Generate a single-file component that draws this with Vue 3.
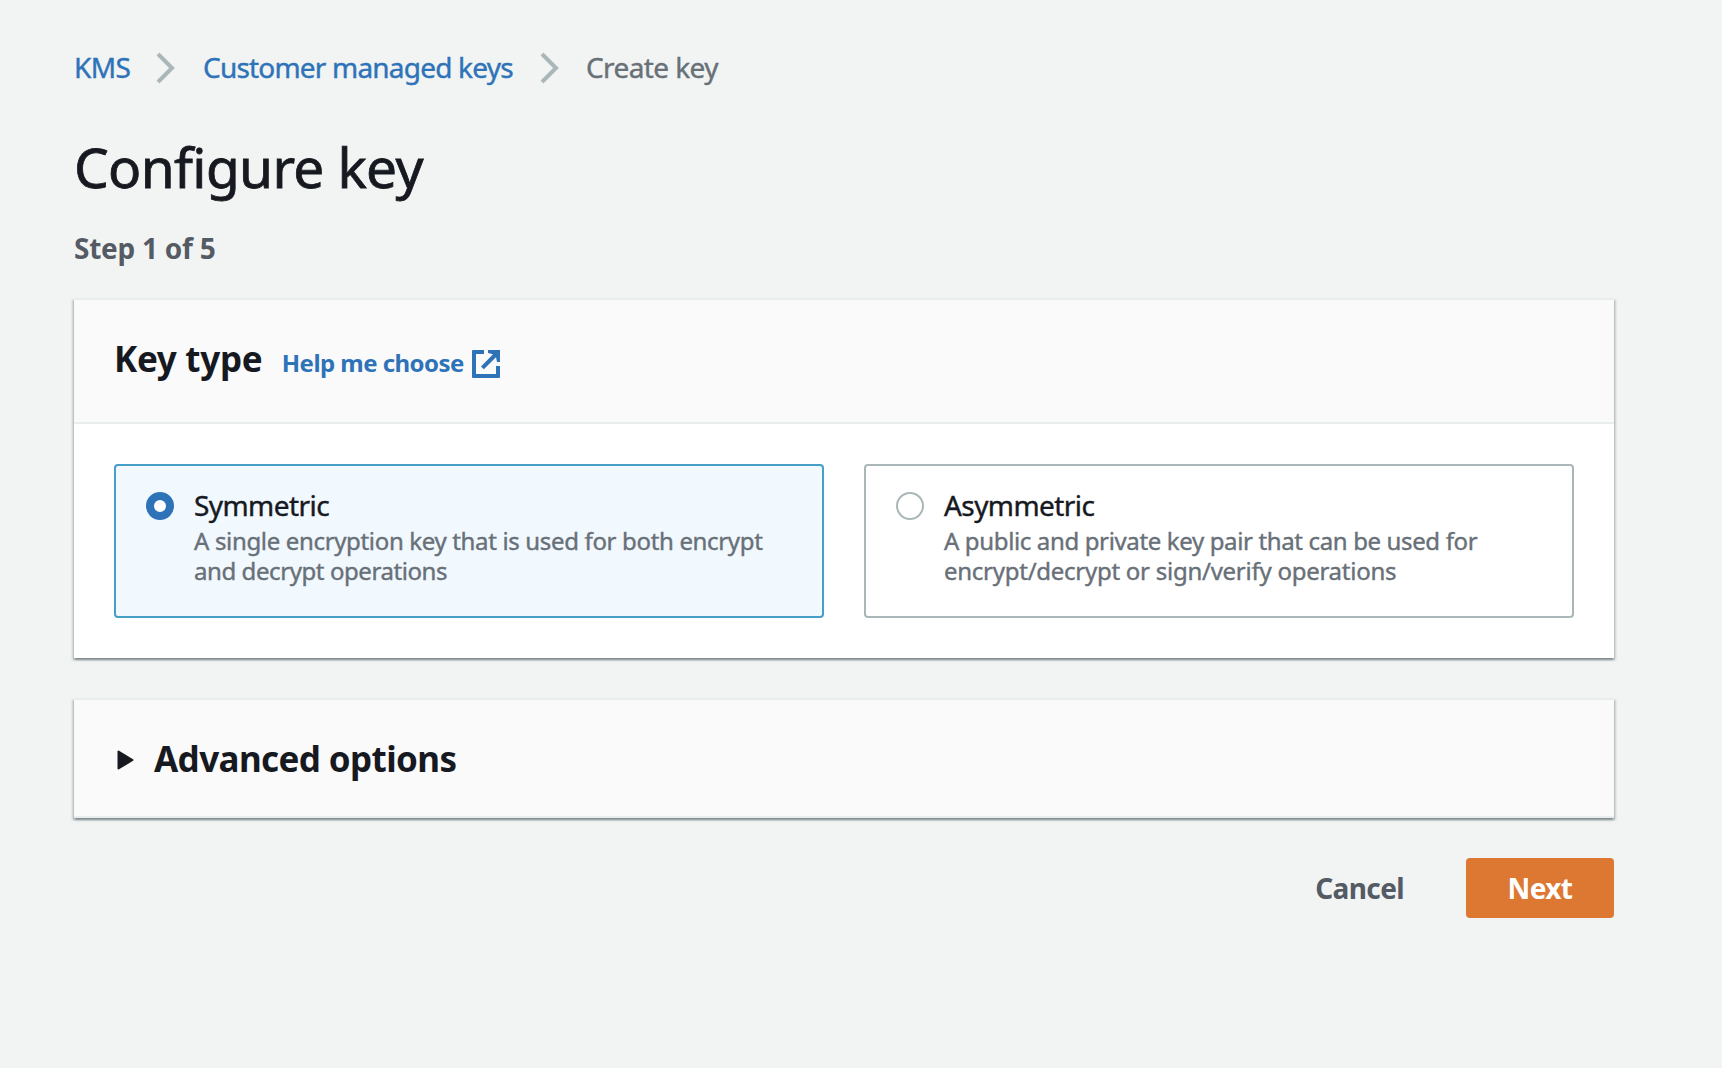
<script setup>
import { ref } from 'vue'

const keyTypes = [
  { id: 'symmetric', label: 'Symmetric', lines: ['A single encryption key that is used for both encrypt', 'and decrypt operations'] },
  { id: 'asymmetric', label: 'Asymmetric', lines: ['A public and private key pair that can be used for', 'encrypt/decrypt or sign/verify operations'] },
]
const selected = ref('symmetric')
</script>

<template>
  <main class="page">
    <nav class="crumbs">
      <a class="link kms">KMS</a>
      <svg class="chev" width="20" height="32" viewBox="0 0 20 32"><path d="M2 2 16 16 2 30" /></svg>
      <a class="link cmk">Customer managed keys</a>
      <svg class="chev" width="20" height="32" viewBox="0 0 20 32"><path d="M2 2 16 16 2 30" /></svg>
      <span class="current">Create key</span>
    </nav>
    <h1>Configure key</h1>
    <p class="step">Step 1 of 5</p>

    <section class="panel">
      <header class="head">
        <h2 class="type">Key type</h2>
        <a class="help">Help me choose</a>
        <svg class="ext" width="28" height="28" viewBox="0 0 28 28">
          <path d="M12 0v4H4v20h20v-8h4v11q0 1-1 1H1q-1 0-1-1V1q0-1 1-1Z" />
          <path d="M16 0H28V12H25L24 7.2 11.8 19.2 9 16.4 21 4.2 16 3Z" />
        </svg>
      </header>
      <div class="tiles">
        <label v-for="k in keyTypes" :key="k.id" class="tile" :class="[k.id, { on: selected === k.id }]" @click="selected = k.id">
          <span class="radio"></span>
          <span class="copy">
            <span class="name">{{ k.label }}</span>
            <span v-for="l in k.lines" :key="l" class="desc">{{ l }}</span>
          </span>
        </label>
      </div>
    </section>

    <section class="panel adv">
      <svg class="caret" width="17" height="20" viewBox="0 0 17 20"><path d="M1.5 1.5v17L15.5 10Z" /></svg>
      <h2>Advanced options</h2>
    </section>

    <footer class="actions">
      <button class="cancel">Cancel</button>
      <button class="next">Next</button>
    </footer>
  </main>
</template>

<style>
body { background: #f2f4f3; }
</style>
<style scoped>
.page { box-sizing: border-box; width: 1722px; height: 1068px; padding: 47px 108px 0 74px; background: #f2f4f3; color: #16191f; font-family: "Noto Sans", "Open Sans", sans-serif; overflow: hidden; }
.crumbs { display: flex; align-items: center; height: 40px; font-size: 28px; line-height: 40px; letter-spacing: -.6px; white-space: nowrap; -webkit-text-stroke: .4px; }
.link { color: #2e73b8; }
.kms { width: 82px; }
.cmk { width: 337px; letter-spacing: -.8px; }
.chev { flex: none; margin: 2px 27px 0 0; fill: none; stroke: #aab7b8; stroke-width: 4; }
.current { margin-left: -1px; color: #687078; }
h1, h2, p { margin: 0; }
h1 { margin-top: 44px; font-size: 55px; font-weight: 400; line-height: 72px; letter-spacing: -.65px; -webkit-text-stroke: .8px; }
.step { margin-top: 25px; color: #545b64; font-size: 28px; font-weight: 700; line-height: 40px; letter-spacing: -.25px; }
.panel { margin-top: 30px; border-top: 2px solid #eaeded; background: #fff; box-shadow: 0 2px 2px rgba(0,28,36,.3), 2px 2px 2px rgba(0,28,36,.15), -2px 2px 2px rgba(0,28,36,.15); }
.head { display: flex; align-items: center; height: 122px; padding-left: 40px; border-bottom: 2px solid #eaeded; background: #fafafa; }
h2 { font-size: 35px; font-weight: 700; line-height: 44px; letter-spacing: -.6px; white-space: nowrap; }
.type { margin-bottom: 4px; letter-spacing: -.3px; }
.help { margin: 2px 0 0 19.5px; color: #2e73b8; font-size: 24px; font-weight: 700; letter-spacing: -.55px; white-space: nowrap; }
.ext { margin: 6px 0 0 8px; fill: #2e73b8; }
.tiles { display: flex; gap: 40px; padding: 40px; }
.tile { box-sizing: border-box; display: flex; flex: 1; height: 154px; padding: 20px 30px; border: 2px solid #aab7b8; border-radius: 4px; }
.tile.on { border-color: #459fc7; background: #f1f8fe; }
.radio { box-sizing: border-box; flex: none; width: 28px; height: 28px; margin: 6px 20px 0 0; border: 2px solid #aab7b8; border-radius: 50%; background: #fff; }
.on .radio { border: 8px solid #2e73b8; }
.copy { display: flex; flex-direction: column; white-space: nowrap; -webkit-text-stroke: .4px; }
.name { height: 40px; font-size: 28px; line-height: 38px; letter-spacing: -.57px; }
.desc { color: #687078; font-size: 24px; line-height: 30px; letter-spacing: -.34px; }
.symmetric .desc:last-child { letter-spacing: -.42px; }
.asymmetric .desc { letter-spacing: -.36px; }
.asymmetric .desc:last-child { letter-spacing: -.26px; }
.adv { display: flex; align-items: center; box-sizing: border-box; height: 120px; margin-top: 40px; padding: 4px 0 0 43px; border-bottom: 2px solid #eaeded; background: #fafafa; }
.adv h2 { margin-bottom: 3px; }
.caret { margin-right: 20px; fill: #16191f; stroke: #16191f; stroke-width: 2; stroke-linejoin: round; }
.actions { display: flex; justify-content: flex-end; margin-top: 40px; }
button { height: 60px; border: 0; border-radius: 4px; background: none; font: 700 28px/40px "Noto Sans", "Open Sans", sans-serif; letter-spacing: -.6px; }
.cancel { margin-right: 56px; color: #545b64; }
.next { width: 148px; background: #dd7833; color: #fff; }
</style>
